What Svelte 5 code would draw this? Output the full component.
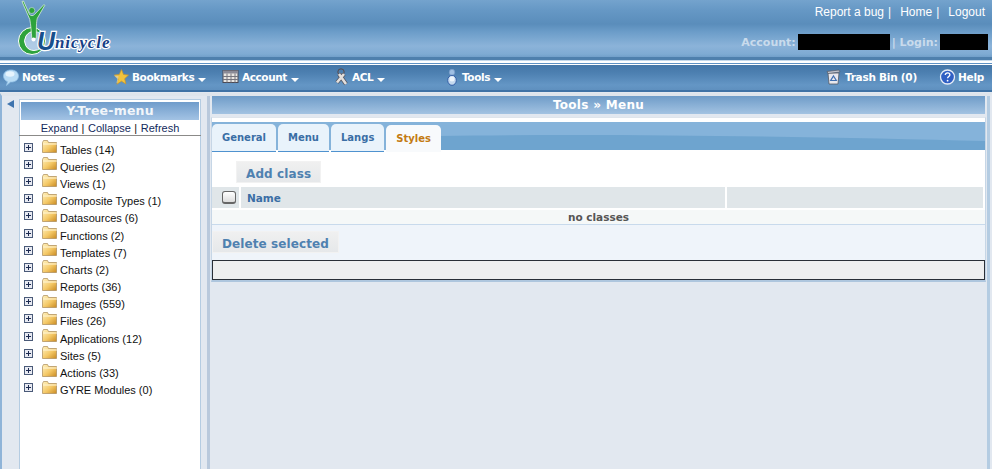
<script lang="ts">
	const navLeft = [
		{ label: 'Notes', icon: 'notes' },
		{ label: 'Bookmarks', icon: 'star' },
		{ label: 'Account', icon: 'account' },
		{ label: 'ACL', icon: 'keys' },
		{ label: 'Tools', icon: 'tools' }
	];

	const tree = [
		'Tables (14)',
		'Queries (2)',
		'Views (1)',
		'Composite Types (1)',
		'Datasources (6)',
		'Functions (2)',
		'Templates (7)',
		'Charts (2)',
		'Reports (36)',
		'Images (559)',
		'Files (26)',
		'Applications (12)',
		'Sites (5)',
		'Actions (33)',
		'GYRE Modules (0)'
	];

	const tabs = ['General', 'Menu', 'Langs', 'Styles'];
	const activeTab = 'Styles';
</script>

{#snippet navIcon(name: string)}
	<svg class="navIcon" width="18" height="18" viewBox="0 0 18 18">
		{#if name === 'notes'}
			<path d="M10 2c4.200 0 7.500 2.300 7.500 6s-3 6-7 6l-1 .1-4 3.400 1-3.800C3.800 12.600 2.500 10.200 2.500 8 2.500 4.300 5.800 2 10 2z" fill="#b9dcf5" stroke="#8fbfe4" stroke-width=".8" />
			<ellipse cx="9" cy="6" rx="4.500" ry="2.800" fill="#e6f4fd" />
		{:else if name === 'star'}
			<path d="M10.500 1.500l2 5 5 .6-3.800 3.600 1.200 5.300-4.400-2.800-4.600 3 1.200-5.500-3.800-3.600 5-.6z" fill="#f2c33c" stroke="#c9952a" stroke-width=".7" />
			<path d="M3 7.500l4.500 .5-1 7.500-1-1 1-3.500z" fill="#d7d0a8" opacity=".8" />
		{:else if name === 'account'}
			<rect x="2" y="2.500" width="15" height="12" fill="#e9e6e2" stroke="#4a4a55" />
			<rect x="2" y="2.500" width="15" height="3" fill="#8a8a96" />
			<path d="M2 8.500h15M2 11.500h15M6 5.500v9M10 5.500v9M14 5.500v9" stroke="#77767f" stroke-width="1" />
		{:else if name === 'keys'}
			<circle cx="10" cy="4" r="3.200" fill="none" stroke="#5a4a4a" stroke-width="1" />
			<path d="M8 6l7 10M13 6L6 14.500" stroke="#55555e" stroke-width="4" />
			<path d="M8 6l7 10M13 6L6 14.500" stroke="#e2dfdd" stroke-width="2.600" />
		{:else if name === 'tools'}
			<ellipse cx="11" cy="4.300" rx="2.700" ry="3" fill="#9fc0e4" stroke="#7a9cc8" stroke-width=".7" />
			<ellipse cx="11" cy="12.300" rx="4.300" ry="5" fill="#c4d9ef" stroke="#2a56a0" stroke-width=".9" />
			<circle cx="11" cy="11" r="2.500" fill="#eef5fc" />
		{:else if name === 'trash'}
			<path d="M3 5h11l-1 11H4z" fill="#e8e8ee" stroke="#555a66" stroke-width=".8" />
			<path d="M2 3.500L14 2l1 2-12 1.500z" fill="#c4c6d0" stroke="#555a66" stroke-width=".7" />
			<path d="M8.500 8l2.800 4.500H5.700z" fill="none" stroke="#3f6fb0" stroke-width="1.200" />
		{:else if name === 'help'}
			<circle cx="9.500" cy="9" r="7" fill="#2f5fc4" stroke="#e6ecf6" stroke-width="1.300" />
			<path d="M7.200 7c.2-1.500 1.200-2.200 2.400-2.200 1.400 0 2.300 .9 2.300 2 0 1.700-2.300 1.800-2.300 3.500" fill="none" stroke="#fff" stroke-width="1.300" />
			<circle cx="9.600" cy="12.700" r=".9" fill="#fff" />
		{/if}
	</svg>
{/snippet}

<div class="page">
	<header class="top">
		<div class="logo">
			<svg width="116" height="56" viewBox="0 0 116 56">
				<!-- wheel: thick on the lower left, thin on the right -->
				<circle cx="32" cy="41" r="10" fill="#cfe0f0" fill-opacity=".55" />
				<path d="M32 27.500a13.500 13.500 0 1 0 0 27 13.500 13.500 0 0 0 0-27zm2 4a9.500 9.500 0 0 1 0 19 9.500 9.500 0 0 1-8-14.500 9.500 9.500 0 0 1 8-4.500z" fill="#2ea33c" fill-rule="evenodd" stroke="#fff" stroke-width="1" />
				<!-- figure -->
				<path d="M22 1.500l1.500-.5L29.500 14.500c1.500 1.500 3.500 1.500 5 0L44 4.500l.8 .8-7.500 13c-1 3-1 11-1 20l-4.500 .2c-.5-7-1-14-2-19z" fill="#2ea33c" stroke="#eef5ea" stroke-width=".7" />
				<circle cx="31.800" cy="10.500" r="3" fill="#2ea33c" stroke="#eef5ea" stroke-width=".5" />
				<circle cx="33.500" cy="39.500" r="2" fill="#fff" />
				<text x="37" y="50" class="logoU">U</text>
				<text x="55" y="48" class="logoText">nicycle</text>
			</svg>
		</div>
		<div class="topRight">
			<div class="links">
				<a href="#bug">Report a bug</a><span>|</span>
				<a href="#home">Home</a><span>|</span>
				<a href="#logout">Logout</a>
			</div>
			<div class="account">
				<span>Account:</span><i class="redact accountName"></i>
				<span>| Login:</span><i class="redact loginName"></i>
			</div>
		</div>
	</header>
	<div class="rule"></div>

	<nav class="nav">
		{#each navLeft as item}
			<a class="navItem" href="#{item.label}">
				{@render navIcon(item.icon)}
				<span>{item.label}</span>
				<i class="caret"></i>
			</a>
		{/each}
		<div class="navRight">
			<a class="navPlain" href="#trash">{@render navIcon('trash')}<span>Trash Bin (0)</span></a>
			<a class="navPlain" href="#help">{@render navIcon('help')}<span>Help</span></a>
		</div>
	</nav>

	<main class="main">
		<aside class="side">
			<div class="collapse"><i class="arrow"></i></div>
			<div class="treePanel">
				<h2 class="treeTitle">Y-Tree-menu</h2>
				<div class="treeLinks">
					<a href="#expand">Expand</a> | <a href="#collapse">Collapse</a> | <a href="#refresh">Refresh</a>
				</div>
				<svg class="defs" width="0" height="0">
					<defs>
						<linearGradient id="folderFill" x1="0" y1="0" x2="1" y2="1">
							<stop offset="0" stop-color="#fff2c0" />
							<stop offset=".55" stop-color="#f4c866" />
							<stop offset="1" stop-color="#c98a22" />
						</linearGradient>
					</defs>
				</svg>
				<ul class="tree">
					{#each tree as node}
						<li>
							<svg class="plus" width="9" height="9" viewBox="0 0 9 9">
								<rect x=".5" y=".5" width="8" height="8" fill="#e8eaf2" stroke="#4a5a78" />
								<path d="M2 4.500h5M4.500 2v5" stroke="#1c2a50" />
							</svg>
							<svg class="folder" width="16" height="13" viewBox="0 0 16 13">
								<path d="M.5 2.500l1-2h4l1 2h8v10H.5z" fill="url(#folderFill)" stroke="#a98a58" stroke-width=".7" />
								<path d="M1 4h14" stroke="#fff6d8" />
							</svg>
							<span>{node}</span>
						</li>
					{/each}
				</ul>
			</div>
		</aside>

		<section class="content">
			<h1 class="pageTitle">Tools » Menu</h1>
			<div class="card">
				<div class="tabBar">
					<svg class="wave" viewBox="0 0 773 28" preserveAspectRatio="none">
						<rect width="773" height="28" fill="#85b3da" />
						<path d="M226 14C400 11 620 15 773 19V28H226z" fill="#6ea4cf" />
					</svg>
					{#each tabs as tab}
						<a class="tab" class:active={tab === activeTab} href="#{tab}">{tab}</a>
					{/each}
				</div>
				<div class="addRow"><button class="bigBtn">Add class</button></div>
				<div class="tableHead">
					<div class="cell checkCell"><i class="check"></i></div>
					<div class="cell nameCell">Name</div>
					<div class="cell lastCell"></div>
				</div>
				<div class="empty">no classes</div>
				<div class="footer"><button class="bigBtn">Delete selected</button></div>
				<div class="statusBox"></div>
			</div>
		</section>
	</main>
</div>

<style>
	:global(body) {
		margin: 0;
		background: #e2e8f0;
	}

	.page {
		width: 992px;
		height: 469px;
		overflow: hidden;
		display: flex;
		flex-direction: column;
		font-family: 'Liberation Sans', Arial, sans-serif;
		background: #e2e8f0;
	}

	a {
		color: inherit;
		text-decoration: none;
	}

	.top {
		height: 57px;
		flex: none;
		display: flex;
		justify-content: space-between;
		background: linear-gradient(#74a3cd 0, #6698c5 10px, #5a8dbb 24px, #6c9dc9 32px, #8bb3d9 46px, #7fabd3 54px, #72a0ca 57px);
		border-bottom: 3px solid #4f80ad;
	}

	.rule {
		height: 5px;
		flex: none;
		background: linear-gradient(#c4d8ea 0 1px, #fff 1px 3px, #5f92c4 3px 4px, #fff 4px 5px);
	}

	.logo {
		height: 56px;
	}

	.logoU {
		font: italic bold 25px 'Liberation Sans', sans-serif;
		fill: #17508c;
		stroke: #fff;
		stroke-width: 2.500px;
		paint-order: stroke;
	}

	.logoText {
		font: italic bold 17px 'Liberation Serif', serif;
		fill: #173f86;
		stroke: #fff;
		stroke-width: 2.500px;
		paint-order: stroke;
		letter-spacing: .9px;
	}

	.topRight {
		display: flex;
		flex-direction: column;
		align-items: flex-end;
		padding-right: 4px;
	}

	.links {
		display: flex;
		gap: 4px;
		padding: 4px 3px 0 0;
		color: #fff;
		font-size: 12px;
		line-height: 16px;
	}

	.links span {
		margin-right: 5px;
	}

	.account {
		display: flex;
		align-items: center;
		margin-top: 14px;
		gap: 2px;
		color: #c9dbec;
		font: bold 11px 'DejaVu Sans', sans-serif;
		height: 16px;
	}

	.redact {
		display: block;
		height: 16px;
		background: #000;
	}

	.accountName {
		width: 92px;
	}

	.loginName {
		width: 48px;
	}

	.nav {
		height: 23px;
		padding: 0 0 2px 1px;
		flex: none;
		display: flex;
		align-items: center;
		background: linear-gradient(#4476a7 0, #4d80b1 8px, #6496c5 20px, #5f90bf 25px);
		border-bottom: 2px solid #3f72a5;
		color: #fff;
		font: bold 10.500px 'DejaVu Sans', sans-serif;
		letter-spacing: -.4px;
	}

	.navItem {
		width: 110px;
		display: flex;
		align-items: center;
		gap: 3px;
		flex: none;
	}

	.navIcon {
		flex: none;
	}

	.caret {
		width: 0;
		height: 0;
		margin: 7px 0 0 1px;
		border-style: solid;
		border-width: 4px 4.500px 0;
		border-color: #fff transparent transparent;
	}

	.navRight {
		margin-left: auto;
		display: flex;
		gap: 21px;
		padding-right: 8px;
		letter-spacing: -.25px;
	}

	.navPlain {
		display: flex;
		align-items: center;
		gap: 2px;
	}

	.main {
		flex: 1;
		min-height: 0;
		display: flex;
		margin-top: 1px;
		border-top: 3px solid #dfe5ec;
		border-left: 2px solid #8fb4d8;
		border-right: 2px solid #e2e8f0;
	}

	.side {
		width: 199px;
		flex: none;
		display: flex;
		border-right: 3px solid #b9c9dc;
		padding-right: 6px;
		box-sizing: content-box;
	}

	.collapse {
		width: 17px;
		flex: none;
		padding-top: 4px;
	}

	.arrow {
		display: block;
		width: 0;
		height: 0;
		margin-left: 5px;
		border-style: solid;
		border-width: 4.500px 7px 4.500px 0;
		border-color: transparent #3f74ae transparent transparent;
	}

	.treePanel {
		flex: 1;
		background: #fff;
		border: 1px solid #b4cce2;
		border-bottom: 0;
		padding: 2px 1px 0;
		margin-top: 3px;
		min-width: 0;
	}

	.treeTitle {
		margin: 0;
		height: 18px;
		background: linear-gradient(#6f9ccb, #a3c3e4);
		color: #f2f6fa;
		text-align: center;
		font: bold 12.500px/18px 'DejaVu Sans', sans-serif;
		letter-spacing: .2px;
	}

	.treeLinks {
		height: 15px;
		margin: 0 -2px;
		line-height: 17px;
		text-align: center;
		font-size: 11px;
		word-spacing: .5px;
		color: #111;
		border-bottom: 1px solid #8b8a88;
	}

	.treeLinks a {
		color: #132a5c;
	}

	.defs {
		display: block;
	}

	.tree {
		margin: 0;
		padding: 5px 0 0 3px;
		list-style: none;
		font-size: 11px;
		color: #111;
	}

	.tree li {
		height: 17.200px;
		display: flex;
		align-items: center;
	}

	.plus {
		flex: none;
		margin-right: 9px;
		margin-top: -5px;
	}

	.folder {
		flex: none;
		margin-right: 2px;
		margin-top: -6px;
	}

	.content {
		flex: 1;
		min-width: 0;
		padding: 0 1px 0 1px;
		border-right: 3px solid #b4cce2;
	}

	.pageTitle {
		margin: 0 1px;
		height: 18px;
		background: linear-gradient(#6f9cc8, #a3c3e2);
		color: #fff;
		text-align: center;
		font: bold 12px/18px 'DejaVu Sans', sans-serif;
		letter-spacing: .3px;
	}

	.card {
		margin-top: 3px;
		padding-top: 4px;
		background: #fff;
		border: 1px solid #c6d6e6;
		border-bottom: 2px solid #aec6de;
		border-top-color: #dfe5ec;
	}

	.tabBar {
		position: relative;
		height: 28px;
		display: flex;
		gap: 2px;
		padding-top: 2px;
		box-sizing: border-box;
	}

	.wave {
		position: absolute;
		left: 0;
		top: 0;
		width: 100%;
		height: 100%;
	}

	.tab {
		position: relative;
		height: 27px;
		padding: 0 10px;
		background: #e9f3fb;
		border-radius: 5px 5px 0 0;
		border-bottom: 1px solid #4f92cf;
		color: #3a6ea5;
		font: bold 10px/27px 'DejaVu Sans', sans-serif;
	}

	.tab.active {
		background: #f8fafc;
		color: #c47a12;
		border-bottom: 0;
		margin-top: 1px;
	}

	.addRow {
		padding: 11px 0 4px 24px;
	}

	.bigBtn {
		display: block;
		height: 22px;
		padding: 3px 9px 0;
		border: 1px solid #f2f2f2;
		background: linear-gradient(#f0f0f0, #e6e8ea);
		color: #4f81b0;
		font: bold 12px/18px 'DejaVu Sans', sans-serif;
		letter-spacing: .1px;
	}

	.tableHead {
		display: flex;
		gap: 2px;
		height: 21px;
		margin-right: 2px;
	}

	.cell {
		background: #e0e6e9;
		display: flex;
		align-items: center;
		color: #3a6ea5;
		font: bold 10.500px 'DejaVu Sans', sans-serif;
	}

	.checkCell {
		width: 27px;
		padding-left: 10px;
		box-sizing: border-box;
	}

	.check {
		display: block;
		width: 12px;
		height: 10px;
		border: 1px solid #666;
		border-bottom-width: 2px;
		border-radius: 3px;
		background: linear-gradient(#fff, #dcdcdc);
	}

	.nameCell {
		width: 478px;
		padding-left: 6px;
	}

	.lastCell {
		flex: 1;
	}

	.empty {
		margin-top: 2px;
		height: 14px;
		background: #f5f8f8;
		border-bottom: 1px solid #c8daec;
		text-align: center;
		color: #555;
		font: bold 10.500px/15px 'DejaVu Sans', sans-serif;
	}

	.footer {
		height: 35px;
		padding-top: 6px;
		box-sizing: border-box;
		background: #eff4fa;
	}

	.statusBox {
		height: 20px;
		box-sizing: border-box;
		background: #efefef;
		border: 1px solid #2b2f36;
	}
</style>
